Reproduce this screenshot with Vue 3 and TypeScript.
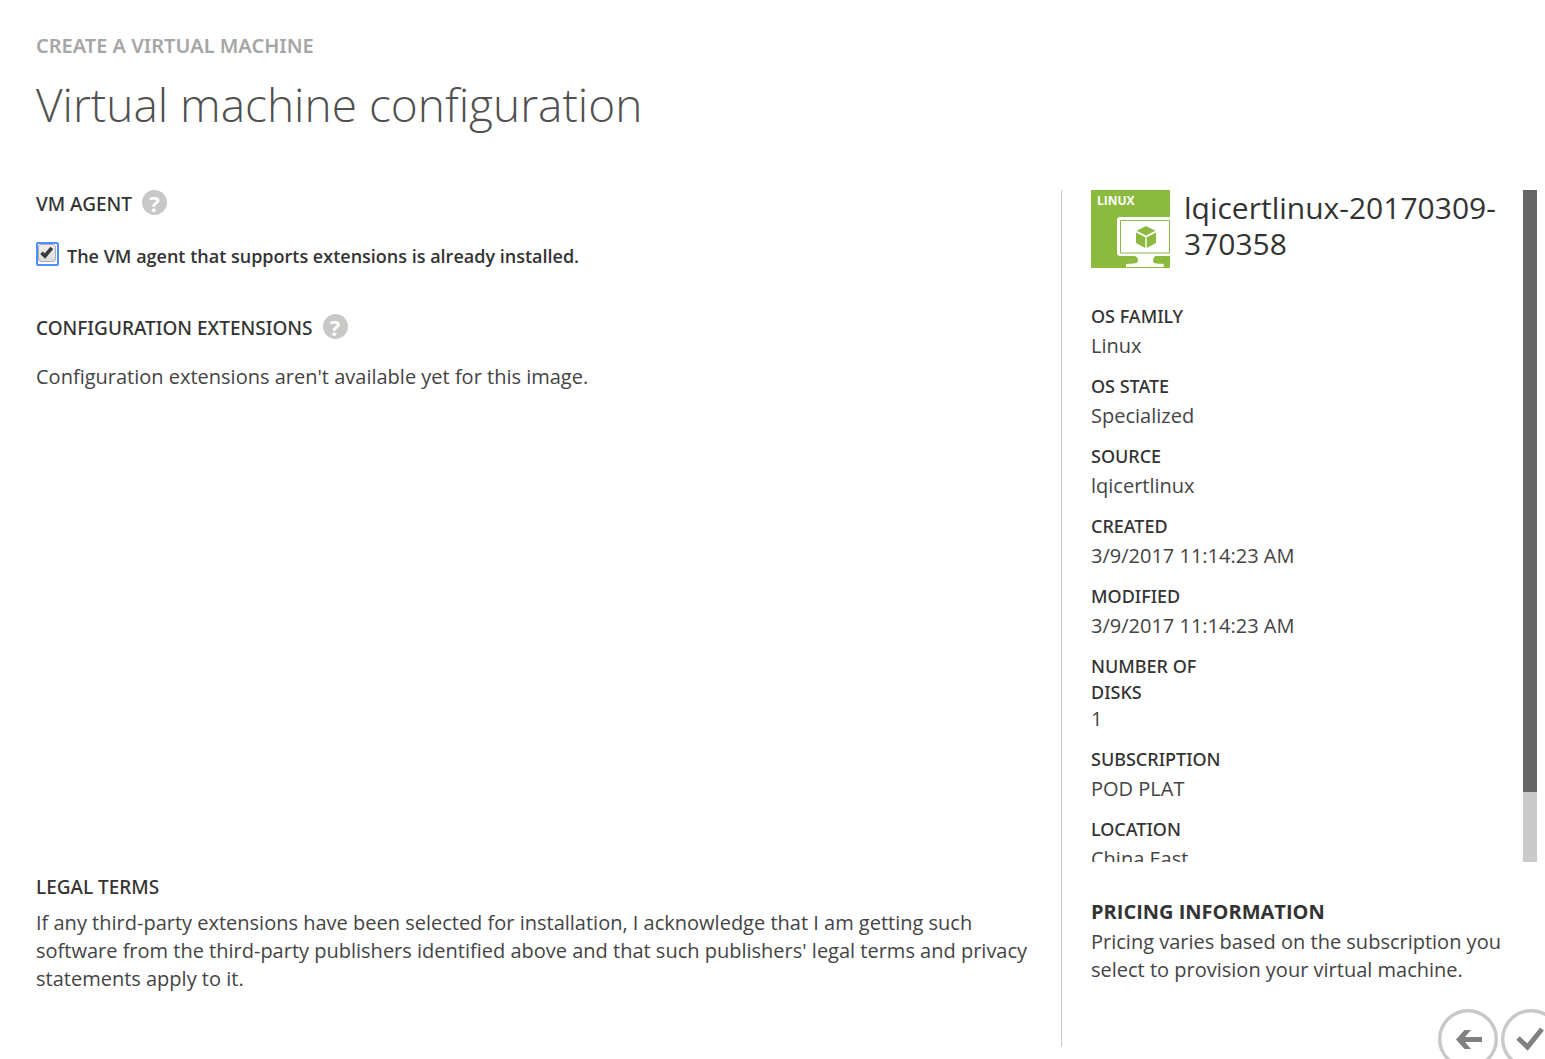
<script setup lang="ts">
import { ref } from 'vue'

interface Detail {
  label: string
  value: string
}

const agentInstalled = ref(true)

const details: Detail[] = [
  { label: 'OS FAMILY', value: 'Linux' },
  { label: 'OS STATE', value: 'Specialized' },
  { label: 'SOURCE', value: 'lqicertlinux' },
  { label: 'CREATED', value: '3/9/2017 11:14:23 AM' },
  { label: 'MODIFIED', value: '3/9/2017 11:14:23 AM' },
  { label: 'NUMBER OF DISKS', value: '1' },
  { label: 'SUBSCRIPTION', value: 'POD PLAT' },
  { label: 'LOCATION', value: 'China East' },
]
</script>

<template>
  <div class="page">
    <header>
      <p class="wizard">CREATE A VIRTUAL MACHINE</p>
      <h1>Virtual machine configuration</h1>
    </header>

    <div class="body">
      <main class="form">
        <div class="heading">
          <h2>VM AGENT</h2>
          <button class="help" type="button" aria-label="Help: VM agent">?</button>
        </div>
        <label class="check">
          <span class="box">
            <input v-model="agentInstalled" type="checkbox" />
            <svg v-if="agentInstalled" viewBox="0 0 18 18" aria-hidden="true">
              <path d="M3.500 8.700 7 12 13.800 3.800" fill="none" stroke="#3b3b3b" stroke-width="3.600" />
            </svg>
          </span>
          <span>The VM agent that supports extensions is already installed.</span>
        </label>

        <div class="heading">
          <h2>CONFIGURATION EXTENSIONS</h2>
          <button class="help" type="button" aria-label="Help: configuration extensions">?</button>
        </div>
        <p class="text">Configuration extensions aren't available yet for this image.</p>

        <section class="legal">
          <h2>LEGAL TERMS</h2>
          <p class="text">
            If any third-party extensions have been selected for installation, I acknowledge that I am getting such
            software from the third-party publishers identified above and that such publishers' legal terms and privacy
            statements apply to it.
          </p>
        </section>
      </main>

      <aside>
        <div class="scroller">
          <div class="info">
            <div class="image">
              <svg class="logo" viewBox="0 0 79 78" role="img" aria-label="Linux image">
                <rect width="79" height="78" fill="#8cba3f" />
                <path d="M79 27H29q-3 0-3 3V63q0 3 3 3H79z" fill="#fff" />
                <path d="M79 30.500H29.500V63H79M78.500 30V63" fill="none" stroke="#8cba3f" />
                <path d="M44 66H64q-2 2-2 4.500c0 3 2 3 10.700 3.500V77H35V74c8.500-.5 12-.5 12-3.500Q47 67 44 66z" fill="#fff" />
                <path d="M55 36l9.500 4.800L55 45.600l-9.500-4.800zM45 42.500l9.300 4.700V58L45 53zM65 42.500l-9.300 4.700V58L65 53z" fill="#8cba3f" />
                <text x="6" y="15" class="tag">LINUX</text>
              </svg>
              <h3>lqicertlinux-20170309-370358</h3>
            </div>
            <dl>
              <div v-for="d in details" :key="d.label" class="row">
                <dt>{{ d.label }}</dt>
                <dd>{{ d.value }}</dd>
              </div>
            </dl>
          </div>
          <div class="track"><div class="thumb"></div></div>
        </div>

        <section class="pricing">
          <h4>PRICING INFORMATION</h4>
          <p class="text">Pricing varies based on the subscription you select to provision your virtual machine.</p>
        </section>

        <nav>
          <button type="button" aria-label="Back">
            <svg viewBox="0 0 60 60" aria-hidden="true">
              <circle cx="30" cy="30" r="28.300" fill="#fff" stroke="#c8c8c8" stroke-width="3.400" />
              <path d="M26.500 21H33l-6 7H44v5H27l6 7h-6.500L18 30.500z" fill="#808080" />
            </svg>
          </button>
          <button type="button" aria-label="Complete">
            <svg viewBox="0 0 60 60" aria-hidden="true">
              <circle cx="30" cy="30" r="28.300" fill="#fff" stroke="#c8c8c8" stroke-width="3.400" />
              <path d="M17 29 26.500 38 41 20" fill="none" stroke="#808080" stroke-width="5" />
            </svg>
          </button>
        </nav>
      </aside>
    </div>
  </div>
</template>

<style>
body {
  margin: 0;
  background: #fff;
}
</style>

<style scoped>
.page {
  box-sizing: border-box;
  height: 100vh;
  padding: 32px 0 12px 36px;
  display: flex;
  flex-direction: column;
  overflow: hidden;
  color: #333;
  font-family: 'Open Sans', 'Noto Sans', sans-serif;
  font-size: 20px;
  line-height: 28px;
}
p, h1, h2, h3, h4, dl, dd {
  margin: 0;
}
button {
  padding: 0;
  border: 0;
  background: none;
  font-family: inherit;
}
.text,
dd {
  color: #444;
}
.wizard {
  color: #a6a6a6;
  font-family: 'Noto Sans', 'Open Sans', sans-serif;
  font-size: 20px;
  font-weight: 600;
}
h1 {
  margin-top: 12px;
  color: #505050;
  font-size: 46px;
  line-height: 64px;
  font-weight: 300;
}
.body {
  flex: 1;
  min-height: 0;
  margin-top: 54px;
  display: grid;
  grid-template-columns: minmax(0, 1fr) 483px;
  grid-template-rows: minmax(0, 1fr);
}
.form {
  display: flex;
  flex-direction: column;
  border-right: 1px solid #c8c8c8;
  padding-right: 24px;
}
.heading {
  display: flex;
  gap: 10px;
}
h2, dt {
  font-family: 'Noto Sans', 'Open Sans', sans-serif;
  font-size: 18px;
  font-weight: 500;
}
h2 {
  font-size: 19px;
}
.help {
  width: 25px;
  height: 25px;
  border-radius: 50%;
  background: #c8c8c8;
  color: #fff;
  font-size: 22px;
  line-height: 24px;
  font-weight: 700;
}
.check {
  display: flex;
  gap: 8px;
  margin: 24px 0 44px;
  font-weight: 600;
  font-size: 18px;
}
.box {
  display: grid;
  box-sizing: border-box;
  width: 23px;
  height: 24px;
  border: 2px solid #4d90fe;
  border-radius: 2px;
}
.box input,
.box svg {
  grid-area: 1 / 1;
}
.box input {
  appearance: none;
  box-sizing: border-box;
  width: 18px;
  height: 18px;
  margin: 0;
  border: 1px solid #acacac;
  border-radius: 3px;
  outline: none;
  background: linear-gradient(#ededed, #dedede);
}
.box svg {
  width: 18px;
  height: 18px;
  pointer-events: none;
}
.form > .text {
  margin-top: 21px;
}
.legal {
  margin-top: auto;
  padding-bottom: 54px;
}
.legal .text {
  margin-top: 8px;
}
aside {
  display: flex;
  flex-direction: column;
  margin-bottom: -22px;
  padding: 0 8px 0 29px;
}
.scroller {
  flex: 1;
  min-height: 0;
  display: flex;
  overflow: hidden;
}
.info {
  flex: 1;
}
.image {
  display: flex;
  gap: 14px;
}
.logo {
  flex: none;
  width: 79px;
  height: 78px;
}
.tag {
  fill: #fff;
  font-size: 12px;
  font-weight: 700;
}
h3 {
  font-size: 30px;
  line-height: 36px;
  font-weight: 400;
}
dl {
  margin-top: 35px;
}
.row {
  margin-bottom: 13px;
}
dt {
  width: 144px;
  min-height: 29px;
  line-height: 26px;
}
.track {
  width: 14px;
  background: #cacaca;
}
.thumb {
  height: 602px;
  background: #666;
}
.pricing {
  padding: 36px 10px 25px 0;
}
h4 {
  margin-bottom: 2px;
  font-size: 20px;
  font-weight: 700;
}
nav {
  display: flex;
  justify-content: flex-end;
  gap: 3px;
  margin-right: -24px;
}
nav button,
nav svg {
  display: block;
  width: 60px;
  height: 60px;
}
</style>
